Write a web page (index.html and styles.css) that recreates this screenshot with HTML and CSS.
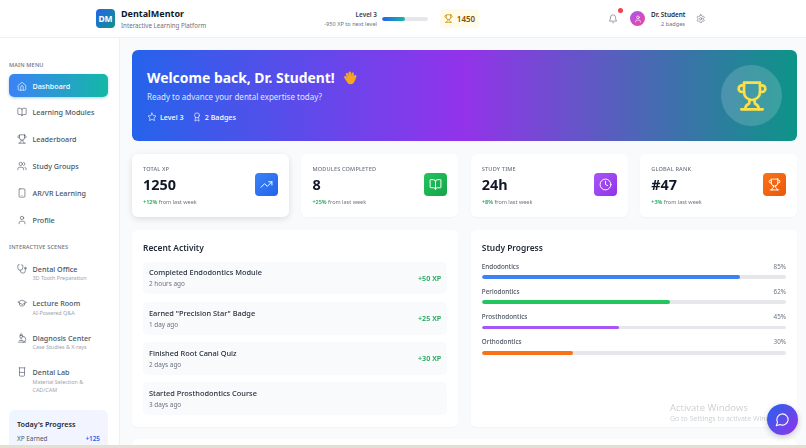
FILE: index.html
```html
<!DOCTYPE html>
<html lang="en">
<head>
<meta charset="utf-8">
<title>DentalMentor</title>
<link rel="stylesheet" href="styles.css">
</head>
<body>
<div class="app">
  <header class="topbar">
    <div class="brand">
      <div class="logo">DM</div>
      <div class="brand-text">
        <div class="brand-name">DentalMentor</div>
        <div class="brand-sub">Interactive Learning Platform</div>
      </div>
    </div>
    <div class="level">
      <div class="level-text">
        <div class="level-name">Level 3</div>
        <div class="level-sub">-950 XP to next level</div>
      </div>
      <div class="level-bar"><div class="level-fill"></div></div>
      <div class="points">
        <svg class="points-icon" viewBox="0 0 24 24"><use href="#i-trophy"/></svg>
        <span>1450</span>
      </div>
    </div>
    <div class="user">
      <div class="bell">
        <svg class="bell-icon" viewBox="0 0 24 24"><path d="M6 8a6 6 0 0 1 12 0c0 7 3 9 3 9H3s3-2 3-9"/><path d="M10.3 21a1.94 1.94 0 0 0 3.4 0"/></svg>
        <span class="bell-dot"></span>
      </div>
      <div class="avatar"><svg viewBox="0 0 24 24"><path d="M19 21v-2a4 4 0 0 0-4-4H9a4 4 0 0 0-4 4v2"/><circle cx="12" cy="7" r="4"/></svg></div>
      <div class="user-text">
        <div class="user-name">Dr. Student</div>
        <div class="user-sub">2 badges</div>
      </div>
      <svg class="gear" viewBox="0 0 24 24"><path d="M12.22 2h-.44a2 2 0 0 0-2 2v.18a2 2 0 0 1-1 1.73l-.43.25a2 2 0 0 1-2 0l-.15-.08a2 2 0 0 0-2.73.73l-.22.38a2 2 0 0 0 .73 2.73l.15.1a2 2 0 0 1 1 1.72v.51a2 2 0 0 1-1 1.74l-.15.09a2 2 0 0 0-.73 2.73l.22.38a2 2 0 0 0 2.73.73l.15-.08a2 2 0 0 1 2 0l.43.25a2 2 0 0 1 1 1.73V20a2 2 0 0 0 2 2h.44a2 2 0 0 0 2-2v-.18a2 2 0 0 1 1-1.73l.43-.25a2 2 0 0 1 2 0l.15.08a2 2 0 0 0 2.73-.73l.22-.39a2 2 0 0 0-.73-2.73l-.15-.08a2 2 0 0 1-1-1.74v-.5a2 2 0 0 1 1-1.74l.15-.09a2 2 0 0 0 .73-2.73l-.22-.38a2 2 0 0 0-2.73-.73l-.15.08a2 2 0 0 1-2 0l-.43-.25a2 2 0 0 1-1-1.73V4a2 2 0 0 0-2-2z"/><circle cx="12" cy="12" r="3"/></svg>
    </div>
  </header>

  <div class="body">
    <aside class="sidebar">
      <div class="side-label">MAIN MENU</div>
      <nav class="menu">
        <a class="menu-item active"><svg viewBox="0 0 24 24"><path d="M3 10.5 12 3l9 7.5V20a2 2 0 0 1-2 2H5a2 2 0 0 1-2-2z"/><path d="M9 22v-8a3 3 0 0 1 6 0v8"/></svg><span>Dashboard</span></a>
        <a class="menu-item"><svg viewBox="0 0 24 24"><path d="M12 7v14"/><path d="M3 18a1 1 0 0 1-1-1V4a1 1 0 0 1 1-1h5a4 4 0 0 1 4 4 4 4 0 0 1 4-4h5a1 1 0 0 1 1 1v13a1 1 0 0 1-1 1h-6a3 3 0 0 0-3 3 3 3 0 0 0-3-3z"/></svg><span>Learning Modules</span></a>
        <a class="menu-item"><svg viewBox="0 0 24 24"><use href="#i-trophy"/></svg><span>Leaderboard</span></a>
        <a class="menu-item"><svg viewBox="0 0 24 24"><path d="M16 21v-2a4 4 0 0 0-4-4H6a4 4 0 0 0-4 4v2"/><circle cx="9" cy="7" r="4"/><path d="M22 21v-2a4 4 0 0 0-3-3.87"/><path d="M16 3.13a4 4 0 0 1 0 7.75"/></svg><span>Study Groups</span></a>
        <a class="menu-item"><svg viewBox="0 0 24 24"><rect x="5" y="2" width="14" height="20" rx="2"/><path d="M12 18h.01"/></svg><span>AR/VR Learning</span></a>
        <a class="menu-item"><svg viewBox="0 0 24 24"><path d="M19 21v-2a4 4 0 0 0-4-4H9a4 4 0 0 0-4 4v2"/><circle cx="12" cy="7" r="4"/></svg><span>Profile</span></a>
      </nav>
      <div class="side-label scenes">INTERACTIVE SCENES</div>
      <nav class="menu scene-list">
        <a class="menu-item scene"><svg viewBox="0 0 24 24"><path d="M4.8 2.3A.3.3 0 1 0 5 2H4a2 2 0 0 0-2 2v5a6 6 0 0 0 6 6 6 6 0 0 0 6-6V4a2 2 0 0 0-2-2h-1a.2.2 0 1 0 .3.3"/><path d="M8 15v1a6 6 0 0 0 6 6 6 6 0 0 0 6-6v-4"/><circle cx="20" cy="10" r="2"/></svg><div class="scene-text"><div class="scene-name">Dental Office</div><div class="scene-sub">3D Tooth Preparation</div></div></a>
        <a class="menu-item scene"><svg viewBox="0 0 24 24"><path d="M22 10 12 5 2 10l10 5z"/><path d="M6 12v5c3 3 9 3 12 0v-5"/></svg><div class="scene-text"><div class="scene-name">Lecture Room</div><div class="scene-sub">AI-Powered Q&amp;A</div></div></a>
        <a class="menu-item scene"><svg viewBox="0 0 24 24"><path d="M6 18h8"/><path d="M3 22h18"/><path d="M14 22a7 7 0 1 0 0-14h-1"/><path d="M9 14h2"/><path d="M9 12a2 2 0 0 1-2-2V6h6v4a2 2 0 0 1-2 2z"/><path d="M12 6V3a1 1 0 0 0-1-1H9a1 1 0 0 0-1 1v3"/></svg><div class="scene-text"><div class="scene-name">Diagnosis Center</div><div class="scene-sub">Case Studies &amp; X-rays</div></div></a>
        <a class="menu-item scene"><svg viewBox="0 0 24 24"><path d="M5 2h14"/><path d="M6 2v18a2 2 0 0 0 2 2h8a2 2 0 0 0 2-2V2"/><path d="M6 13h12"/></svg><div class="scene-text"><div class="scene-name">Dental Lab</div><div class="scene-sub">Material Selection &amp; CAD/CAM</div></div></a>
      </nav>
      <div class="today">
        <div class="today-title">Today's Progress</div>
        <div class="today-row"><span>XP Earned</span><b>+125</b></div>
      </div>
    </aside>

    <main class="main">
      <section class="hero">
        <div>
          <h1 class="hero-title">Welcome back, Dr. Student!<svg class="wave" viewBox="0 0 24 24"><g stroke="#f5a623" stroke-width="4.200"><path d="M7 15 3.800 10.500"/><path d="M9.500 12 7 5.500"/><path d="M13 11 11.500 3"/><path d="M16.500 11.500 16.500 4.500"/><path d="M19 14.500 21 9"/></g><circle cx="13" cy="15.500" r="7.200" fill="#f5a623" stroke="none"/></svg></h1>
          <p class="hero-sub">Ready to advance your dental expertise today?</p>
          <div class="hero-meta">
            <span class="hero-chip"><svg viewBox="0 0 24 24"><path d="M12 2.500l2.950 6 6.600.96-4.780 4.650 1.130 6.570L12 17.580l-5.900 3.100 1.130-6.570L2.450 9.460l6.600-.96z"/></svg>Level 3</span>
            <span class="hero-chip"><svg viewBox="0 0 24 24"><circle cx="12" cy="8" r="6"/><path d="M15.480 12.890 17 22l-5-3-5 3 1.520-9.110"/></svg>2 Badges</span>
          </div>
        </div>
        <div class="hero-badge"><svg viewBox="0 0 24 24"><use href="#i-trophy"/></svg></div>
      </section>

      <section class="stats">
        <article class="stat raised">
          <div class="stat-body"><div class="stat-label">TOTAL XP</div><div class="stat-value">1250</div><div class="stat-note"><b>+12%</b> from last week</div></div>
          <div class="stat-icon blue"><svg viewBox="0 0 24 24"><path d="m22 7-8.500 8.500-5-5L2 17"/><path d="M16 7h6v6"/></svg></div>
        </article>
        <article class="stat">
          <div class="stat-body"><div class="stat-label">MODULES COMPLETED</div><div class="stat-value">8</div><div class="stat-note"><b>+25%</b> from last week</div></div>
          <div class="stat-icon green"><svg viewBox="0 0 24 24"><path d="M12 7v14"/><path d="M3 18a1 1 0 0 1-1-1V4a1 1 0 0 1 1-1h5a4 4 0 0 1 4 4 4 4 0 0 1 4-4h5a1 1 0 0 1 1 1v13a1 1 0 0 1-1 1h-6a3 3 0 0 0-3 3 3 3 0 0 0-3-3z"/></svg></div>
        </article>
        <article class="stat">
          <div class="stat-body"><div class="stat-label">STUDY TIME</div><div class="stat-value">24h</div><div class="stat-note"><b>+8%</b> from last week</div></div>
          <div class="stat-icon purple"><svg viewBox="0 0 24 24"><circle cx="12" cy="12" r="10"/><path d="M12 6v6l4 2"/></svg></div>
        </article>
        <article class="stat">
          <div class="stat-body"><div class="stat-label">GLOBAL RANK</div><div class="stat-value">#47</div><div class="stat-note"><b>+3%</b> from last week</div></div>
          <div class="stat-icon orange"><svg viewBox="0 0 24 24"><use href="#i-trophy"/></svg></div>
        </article>
      </section>

      <section class="panels">
        <article class="panel">
          <h2 class="panel-title">Recent Activity</h2>
          <div class="activities">
            <div class="activity"><div><div class="activity-name">Completed Endodontics Module</div><div class="activity-time">2 hours ago</div></div><div class="activity-xp">+50 XP</div></div>
            <div class="activity"><div><div class="activity-name">Earned "Precision Star" Badge</div><div class="activity-time">1 day ago</div></div><div class="activity-xp">+25 XP</div></div>
            <div class="activity"><div><div class="activity-name">Finished Root Canal Quiz</div><div class="activity-time">2 days ago</div></div><div class="activity-xp">+30 XP</div></div>
            <div class="activity"><div><div class="activity-name">Started Prosthodontics Course</div><div class="activity-time">3 days ago</div></div></div>
          </div>
        </article>
        <article class="panel">
          <h2 class="panel-title">Study Progress</h2>
          <div class="courses">
            <div class="course"><div class="course-head"><span class="course-name">Endodontics</span><span class="course-pct">85%</span></div><div class="track"><div class="fill c-blue" style="width:85%"></div></div></div>
            <div class="course"><div class="course-head"><span class="course-name">Periodontics</span><span class="course-pct">62%</span></div><div class="track"><div class="fill c-green" style="width:62%"></div></div></div>
            <div class="course"><div class="course-head"><span class="course-name">Prosthodontics</span><span class="course-pct">45%</span></div><div class="track"><div class="fill c-purple" style="width:45%"></div></div></div>
            <div class="course"><div class="course-head"><span class="course-name">Orthodontics</span><span class="course-pct">30%</span></div><div class="track"><div class="fill c-orange" style="width:30%"></div></div></div>
          </div>
        </article>
      </section>
      <div class="next-panel"></div>
    </main>
  </div>
  <div class="taskbar-edge"></div>
</div>

<div class="watermark"><div class="wm-title">Activate Windows</div><div class="wm-sub">Go to Settings to activate Windows.</div></div>
<button class="chat" aria-label="Chat"><svg viewBox="0 0 24 24"><path d="M7.900 20A9 9 0 1 0 4 16.100L2 22z"/></svg></button>

<svg class="defs" aria-hidden="true"><defs><g id="i-trophy"><path d="M6 9H4.500a2.500 2.500 0 0 1 0-5H6"/><path d="M18 9h1.500a2.500 2.500 0 0 0 0-5H18"/><path d="M4 22h16"/><path d="M10 14.660V17c0 .550-.470.980-.970 1.210C7.850 18.750 7 20.240 7 22"/><path d="M14 14.660V17c0 .550.470.980.970 1.210C16.150 18.750 17 20.240 17 22"/><path d="M18 2H6v7a6 6 0 0 0 12 0V2z"/></g></defs></svg>
</body>
</html>
```

FILE: styles.css
```css
* { box-sizing: border-box; }
html, body { margin: 0; height: 100%; overflow: hidden; }
body { font-family: "Noto Sans", "Open Sans", sans-serif; color: #111827; background: #f9fafb; filter: blur(.3px); }
svg { fill: none; stroke: currentColor; stroke-width: 2; stroke-linecap: round; stroke-linejoin: round; flex: none; }
.defs { position: absolute; width: 0; height: 0; }
.app { height: 448px; display: flex; flex-direction: column; }

.topbar { height: 38px; flex: none; display: flex; align-items: center; background: #fff; border-bottom: 1px solid #eef0f3; padding-left: 96px; }
.brand { display: flex; align-items: center; gap: 6px; width: 215px; }
.logo { width: 19px; height: 19px; border-radius: 4px; background: linear-gradient(135deg, #2563eb, #0d9488); color: #fff; font-size: 8.500px; font-weight: 700; display: flex; align-items: center; justify-content: center; }
.brand-name { font-size: 9px; font-weight: 700; line-height: 13px; }
.brand-sub { font-size: 6.200px; color: #6b7280; line-height: 10px; margin-top: 1px; }
.level { display: flex; align-items: center; width: 168px; }
.level-text { width: 66px; text-align: right; }
.level-name { font-size: 6.400px; font-weight: 600; color: #374151; line-height: 9px; }
.level-sub { font-size: 5.600px; color: #6b7280; line-height: 8px; margin-top: 1px; white-space: nowrap; }
.level-bar { width: 46px; height: 4px; border-radius: 3px; background: #e5e7eb; margin-left: 5px; overflow: hidden; }
.level-fill { width: 50%; height: 100%; background: linear-gradient(90deg, #2563eb, #14b8a6); border-radius: 3px; }
.points { width: 39px; height: 19px; margin-left: 12px; border-radius: 4px; background: #fefce8; display: flex; align-items: center; justify-content: center; gap: 4px; font-size: 8px; font-weight: 600; color: #854d0e; }
.points-icon { width: 9px; height: 9px; color: #ca8a04; }
.user { display: flex; align-items: center; margin-left: 126px; }
.bell { position: relative; width: 16px; height: 16px; display: flex; align-items: center; justify-content: center; }
.bell-icon { width: 10px; height: 10px; color: #6b7280; stroke-width: 1.600; }
.bell-dot { position: absolute; top: -3px; right: -2px; width: 5px; height: 5px; border-radius: 50%; background: #ef4444; }
.avatar { width: 15px; height: 15px; margin-left: 9px; border-radius: 50%; background: linear-gradient(135deg, #a855f7, #ec4899); color: #fff; display: flex; align-items: center; justify-content: center; }
.avatar svg { width: 8px; height: 8px; }
.user-text { width: 34px; margin-left: 6px; text-align: right; }
.user-name { font-size: 6.400px; font-weight: 600; line-height: 9px; color: #1f2937; white-space: nowrap; }
.user-sub { font-size: 5.600px; color: #6b7280; line-height: 8px; margin-top: 1px; }
.gear { width: 9.500px; height: 9.500px; margin-left: 11px; color: #6b7280; stroke-width: 1.600; }

.body { flex: 1; min-height: 0; display: flex; }
.sidebar { width: 120px; flex: none; background: #fff; border-right: 1px solid #f0f1f4; padding: 23px 11px 0 9px; overflow: hidden; }
.side-label { font-size: 5.600px; font-weight: 500; color: #6b7280; letter-spacing: .15px; line-height: 8px; }
.scenes { margin-top: 11.800px; }
.menu { margin-top: 5px; display: flex; flex-direction: column; gap: 3.600px; }
.menu-item { height: 23.200px; display: flex; align-items: center; gap: 5.500px; padding-left: 8px; border-radius: 5px; font-size: 7.200px; font-weight: 500; color: #4b5563; }
.menu-item svg { width: 10px; height: 10px; stroke-width: 1.500; }
.menu-item.active { background: linear-gradient(90deg, #3b82f6, #14b8a6); color: #fff; box-shadow: 0 1px 3px rgba(20,120,170,.35); }
.scene-list { gap: 13.500px; margin-top: 11px; }
.scene { height: auto; align-items: flex-start; padding-top: 2px; }
.scene svg { margin-top: 0; }
.scene-name { font-size: 7.200px; font-weight: 500; line-height: 10px; color: #4b5563; }
.scene-sub { font-size: 5.400px; font-weight: 400; color: #9ca3af; line-height: 8.500px; margin-top: .5px; width: 70px; }
.today { margin-top: 15.500px; height: 60px; border-radius: 6px; background: linear-gradient(135deg, #eff6ff, #f5f3ff); padding: 8.500px 8px; }
.today-title { font-size: 7.200px; font-weight: 600; color: #1f2937; line-height: 11px; }
.today-row { display: flex; justify-content: space-between; margin-top: 4px; font-size: 6.400px; color: #4b5563; line-height: 9px; }
.today-row b { color: #2563eb; font-weight: 600; }

.main { flex: 1; min-width: 0; padding: 12px 9px 0 12px; overflow: hidden; }
.hero { height: 91px; border-radius: 6px; background: linear-gradient(90deg, #2563eb 0%, #9333ea 50%, #0d9488 100%); display: flex; justify-content: space-between; align-items: center; padding: 0 15px; color: #fff; }
.hero-title { margin: -1px 0 0; font-size: 13.900px; font-weight: 700; line-height: 20px; display: flex; align-items: center; }
.wave { width: 14px; height: 14px; margin-left: 8px; stroke: none; }
.hero-sub { margin: 3px 0 0; font-size: 8px; line-height: 11px; color: #dbeafe; }
.hero-meta { display: flex; gap: 8px; margin-top: 9.500px; }
.hero-chip { display: flex; align-items: center; gap: 3px; font-size: 7.200px; font-weight: 500; line-height: 10px; }
.hero-chip svg { width: 10px; height: 10px; stroke-width: 1.500; }
.hero-badge { width: 61px; height: 61px; border-radius: 50%; background: rgba(255,255,255,.16); display: flex; align-items: center; justify-content: center; color: #fde047; }
.hero-badge svg { width: 32px; height: 32px; }

.stats { margin-top: 13px; display: grid; grid-template-columns: repeat(4, 1fr); gap: 12.700px; }
.stat { height: 63px; background: #fff; border-radius: 6px; padding: 11px 11px 0; display: flex; justify-content: space-between; box-shadow: 0 1px 2px rgba(0,0,0,.03); }
.stat.raised { box-shadow: 0 2px 6px rgba(0,0,0,.12); }
.stat-label { font-size: 5.600px; font-weight: 500; color: #6b7280; letter-spacing: .15px; line-height: 8px; }
.stat-value { font-size: 14.400px; font-weight: 700; color: #111827; line-height: 20px; margin-top: 2px; }
.stat-note { font-size: 5.500px; color: #6b7280; line-height: 8px; margin-top: 3px; }
.stat-note b { color: #22a55a; font-weight: 600; }
.stat-icon { width: 23px; height: 23px; margin-top: 8px; border-radius: 4px; color: #fff; display: flex; align-items: center; justify-content: center; }
.stat-icon svg { width: 13px; height: 13px; stroke-width: 1.800; }
.blue { background: linear-gradient(135deg, #3b82f6, #2563eb); }
.green { background: linear-gradient(135deg, #22c55e, #16a34a); }
.purple { background: linear-gradient(135deg, #a855f7, #9333ea); }
.orange { background: linear-gradient(135deg, #f97316, #ea580c); }

.panels { margin-top: 12.500px; display: grid; grid-template-columns: 1fr 1fr; gap: 12.700px; }
.panel { height: 197px; background: #fff; border-radius: 6px; padding: 12px 11px 0; box-shadow: 0 1px 2px rgba(0,0,0,.03); }
.panel-title { margin: 0; font-size: 8.400px; font-weight: 600; line-height: 12px; color: #1f2937; }
.activities { margin-top: 8px; display: flex; flex-direction: column; gap: 7.500px; }
.activity { height: 32.800px; border-radius: 5px; background: #f9fafb; display: flex; justify-content: space-between; align-items: center; padding: 0 6px; }
.activity-name { font-size: 7.400px; font-weight: 500; line-height: 10px; color: #1f2937; }
.activity-time { font-size: 6.400px; color: #6b7280; line-height: 9px; margin-top: 2px; }
.activity-xp { font-size: 7.200px; font-weight: 600; color: #22a55a; }
.courses { margin-top: 8px; display: flex; flex-direction: column; gap: 7.700px; }
.course-head { display: flex; justify-content: space-between; line-height: 9px; font-size: 6.300px; }
.course-name { font-weight: 500; color: #4b5563; }
.course-pct { color: #6b7280; }
.track { height: 3.800px; margin-top: 4.700px; border-radius: 3px; background: #e5e7eb; overflow: hidden; }
.fill { height: 100%; border-radius: 3px; }
.c-blue { background: #3b82f6; }
.c-green { background: #22c55e; }
.c-purple { background: #a855f7; }
.c-orange { background: #f97316; }
.next-panel { margin-top: 12.500px; height: 20px; background: #fff; border-radius: 6px 6px 0 0; }
.taskbar-edge { height: 3px; flex: none; background: #e4dfd3; position: relative; }

.watermark { position: fixed; left: 670px; top: 401px; color: rgba(120,125,135,.38); white-space: nowrap; width: 100px; overflow: visible; }
.wm-title { font-size: 9.500px; line-height: 13px; font-family: "Open Sans", sans-serif; }
.wm-sub { font-size: 7px; line-height: 10px; font-family: "Open Sans", sans-serif; }
.chat { position: fixed; left: 767px; top: 404px; width: 31px; height: 31px; padding: 0; border: 0; border-radius: 50%; background: linear-gradient(135deg, #2563eb, #9333ea); color: #fff; display: flex; align-items: center; justify-content: center; box-shadow: 0 2px 6px rgba(0,0,0,.2); }
.chat svg { width: 15px; height: 15px; stroke-width: 1.700; }
```
